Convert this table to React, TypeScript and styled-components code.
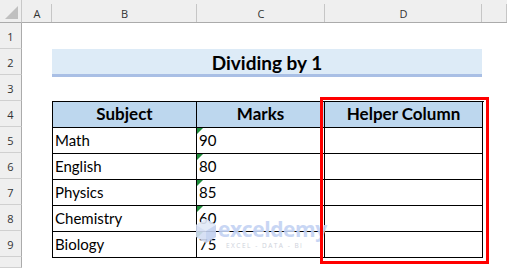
import React from "react";
import styled, { createGlobalStyle } from "styled-components";

const GlobalStyle = createGlobalStyle`
  html, body { margin: 0; padding: 0; background: #ffffff; }
  body { font-family: "Lato", "Liberation Sans", sans-serif; }
`;

const Sheet = styled.div`
  position: relative;
  width: 507px;
  height: 268px;
  overflow: hidden;
  display: grid;
  grid-template-columns: 22px 30px 145px 128px 157px 25px;
  grid-template-rows: 23px repeat(9, 26px) 11px;
  background: #ffffff;
`;

const Corner = styled.div`
  grid-column: 1;
  grid-row: 1;
  background: #efefef;
  border-right: 1px solid #c8c8c8;
  border-bottom: 1px solid #ababab;
  box-sizing: border-box;
  position: relative;
  &::after {
    content: "";
    position: absolute;
    right: 3px;
    bottom: 3px;
    width: 0;
    height: 0;
    border-left: 13px solid transparent;
    border-bottom: 13px solid #c0c0c0;
  }
`;

const ColHeader = styled.div<{ $col: number }>`
  grid-column: ${(p) => p.$col};
  grid-row: 1;
  background: #efefef;
  border-bottom: 1px solid #ababab;
  box-sizing: border-box;
  display: flex;
  align-items: center;
  justify-content: center;
  padding-top: 4px;
  font-family: "Open Sans", "Liberation Sans", sans-serif;
  font-size: 11px;
  color: #333;
  position: relative;
  &::after {
    content: "";
    position: absolute;
    right: 0;
    top: 4px;
    bottom: 0;
    width: 1px;
    background: #c6c6c6;
  }
`;

const RowHeader = styled.div<{ $row: number }>`
  grid-column: 1;
  grid-row: ${(p) => p.$row};
  background: #efefef;
  border-right: 1px solid #ababab;
  border-bottom: 1px solid #d0d0d0;
  box-sizing: border-box;
  display: flex;
  align-items: flex-end;
  justify-content: center;
  padding-bottom: 4px;
  font-family: "Open Sans", "Liberation Sans", sans-serif;
  font-size: 11px;
  line-height: 14px;
  color: #333;
`;

const Title = styled.div`
  grid-column: 3 / 6;
  grid-row: 3;
  align-self: start;
  height: 28px;
  box-sizing: border-box;
  background: #ddebf7;
  border-bottom: 3px solid #a9bfe5;
  display: flex;
  align-items: center;
  justify-content: center;
  padding-top: 2px;
  font-size: 19px;
  font-weight: 700;
  color: #000;
`;

const Table = styled.div`
  grid-column: 3 / 6;
  grid-row: 5 / 11;
  align-self: start;
  display: grid;
  grid-template-columns: 144px 128px 158px;
  grid-auto-rows: 26px;
  border-left: 1px solid #000;
  border-top: 1px solid #000;
  width: 431px;
`;

const Cell = styled.div<{ $head?: boolean; $flag?: boolean }>`
  position: relative;
  box-sizing: border-box;
  border-right: 1px solid #000;
  border-bottom: 1px solid #000;
  background: ${(p) => (p.$head ? "#bdd7ee" : "#ffffff")};
  display: flex;
  align-items: flex-end;
  justify-content: ${(p) => (p.$head ? "center" : "flex-start")};
  padding: 0 2px 4px;
  font-size: ${(p) => (p.$head ? "17px" : "15px")};
  font-weight: ${(p) => (p.$head ? 700 : 400)};
  line-height: 18px;
  color: #000;
  &::before {
    content: "";
    display: ${(p) => (p.$flag ? "block" : "none")};
    position: absolute;
    left: 0;
    top: 0;
    width: 0;
    height: 0;
    border-top: 6px solid #1e8c3a;
    border-right: 6px solid transparent;
  }
`;

const Highlight = styled.div`
  position: absolute;
  left: 320px;
  top: 97px;
  width: 169px;
  height: 167px;
  box-sizing: border-box;
  border: 3px solid #ff0000;
  pointer-events: none;
`;

const Watermark = styled.div`
  position: absolute;
  left: 195px;
  top: 218px;
  display: flex;
  align-items: flex-start;
  gap: 1px;
  opacity: 0.9;
  pointer-events: none;
`;

const Brand = styled.div`
  display: flex;
  flex-direction: column;
  align-items: flex-start;
`;

const BrandName = styled.span`
  font-family: "Open Sans", "Liberation Sans", sans-serif;
  font-weight: 700;
  font-size: 21px;
  line-height: 22px;
  letter-spacing: -0.4px;
  color: #c3d2f3;
`;

const BrandTag = styled.span`
  font-family: "Open Sans", "Liberation Sans", sans-serif;
  font-size: 6.5px;
  line-height: 8px;
  letter-spacing: 1.5px;
  color: #c9ced8;
  margin-left: 8px;
  margin-top: 2px;
`;

const cols = ["A", "B", "C", "D", ""];
const rows = [
  ["Math", "90"],
  ["English", "80"],
  ["Physics", "85"],
  ["Chemistry", "60"],
  ["Biology", "75"],
];

export default function App() {
  return (
    <>
      <GlobalStyle />
      <Sheet>
        <Corner />
        {cols.map((c, i) => (
          <ColHeader key={i} $col={i + 2}>
            {c}
          </ColHeader>
        ))}
        {[1, 2, 3, 4, 5, 6, 7, 8, 9, 10].map((n) => (
          <RowHeader key={n} $row={n + 1}>
            {n <= 9 ? n : ""}
          </RowHeader>
        ))}
        <Title>Dividing by 1</Title>
        <Table>
          <Cell $head>Subject</Cell>
          <Cell $head>Marks</Cell>
          <Cell $head>Helper Column</Cell>
          {rows.map(([s, m]) => (
            <React.Fragment key={s}>
              <Cell>{s}</Cell>
              <Cell $flag>{m}</Cell>
              <Cell />
            </React.Fragment>
          ))}
        </Table>
        <Watermark>
          <svg width="22" height="26" viewBox="0 0 22 26">
            <polygon points="11,1 21,7 21,19 11,25 1,19 1,7" fill="#d3ddf3" />
            <polygon points="11,1 21,7 11,13 1,7" fill="#e2e9f8" />
            <polygon points="11,13 21,7 21,19 11,25" fill="#c2d0ef" />
          </svg>
          <Brand>
            <BrandName>exceldemy</BrandName>
            <BrandTag>EXCEL - DATA - BI</BrandTag>
          </Brand>
        </Watermark>
        <Highlight />
      </Sheet>
    </>
  );
}
